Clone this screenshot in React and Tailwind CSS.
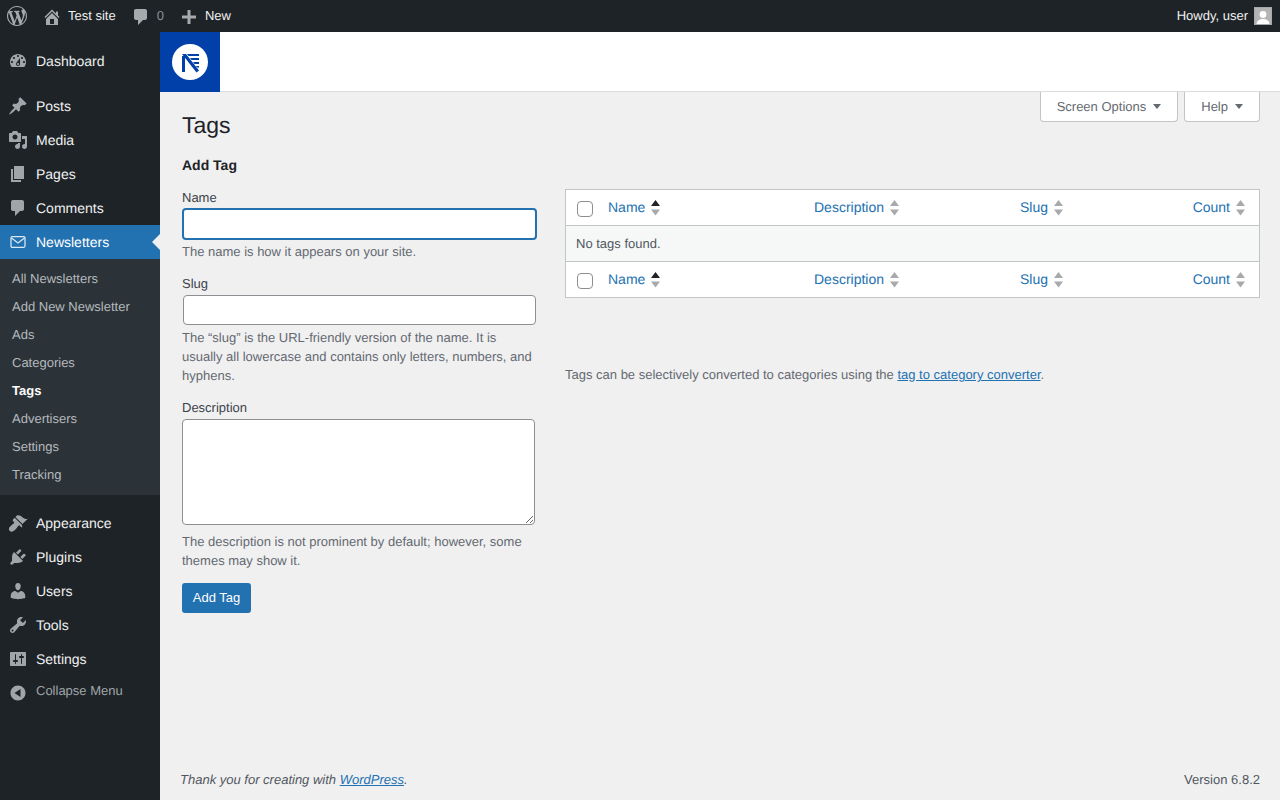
import React from "react";

const font = "font-['Liberation_Sans',Arial,sans-serif]";

const icons = {
  wordpress:
    "M20 10c0-5.51-4.49-10-10-10C4.48 0 0 4.49 0 10c0 5.52 4.48 10 10 10 5.51 0 10-4.48 10-10zM7.78 15.37L4.37 6.22c.55-.02 1.17-.08 1.17-.08.5-.06.44-1.13-.06-1.11 0 0-1.45.11-2.37.11-.18 0-.37 0-.58-.01C4.12 2.69 6.87 1.11 10 1.11c2.33 0 4.45.87 6.05 2.34-.68-.11-1.65.39-1.65 1.58 0 .74.45 1.36.9 2.1.35.61.55 1.36.55 2.46 0 1.49-1.4 5-1.4 5l-3.03-8.37c.54-.02.82-.17.82-.17.5-.05.44-1.25-.06-1.22 0 0-1.44.12-2.38.12-.87 0-2.33-.12-2.33-.12-.5-.03-.56 1.2-.06 1.22l.92.08 1.26 3.41zM17.41 10c.24-.64.74-1.87.43-4.25.7 1.29 1.05 2.71 1.05 4.25 0 3.29-1.73 6.24-4.4 7.78.97-2.59 1.94-5.2 2.92-7.78zM6.1 18.09C3.12 16.65 1.11 13.53 1.11 10c0-1.3.23-2.48.72-3.59C3.25 10.3 4.67 14.2 6.1 18.09zm4.03-6.63l2.58 6.98c-.86.29-1.76.45-2.71.45-.79 0-1.57-.11-2.29-.33.81-2.38 1.62-4.74 2.42-7.1z",
  home: "M16 8.5l1.53 1.53-1.06 1.06L10 4.62l-6.47 6.47-1.06-1.06L10 2.5l4 4v-2h2v4zm-6-2.46l6 5.99V18H4v-5.97zM12 17v-5H8v5h4z",
  dashboard:
    "M3.76 16h12.48c1.1-1.37 1.76-3.11 1.76-5 0-4.42-3.58-8-8-8s-8 3.58-8 8c0 1.89.66 3.63 1.76 5zM10 4c.55 0 1 .45 1 1s-.45 1-1 1-1-.45-1-1 .45-1 1-1zM6 6c.55 0 1 .45 1 1s-.45 1-1 1-1-.45-1-1 .45-1 1-1zm8 0c.55 0 1 .45 1 1s-.45 1-1 1-1-.45-1-1 .45-1 1-1zm-5.37 5.55L12 7v6c0 1.1-.9 2-2 2s-2-.9-2-2c0-.57.24-1.08.63-1.45zM4 10c.55 0 1 .45 1 1s-.45 1-1 1-1-.45-1-1 .45-1 1-1zm12 0c.55 0 1 .45 1 1s-.45 1-1 1-1-.45-1-1 .45-1 1-1zm-5 3c0-.55-.45-1-1-1s-1 .45-1 1 .45 1 1 1 1-.45 1-1z",
  posts:
    "M10.44 3.02l1.82-1.82 6.36 6.35-1.83 1.82c-1.05-.68-2.48-.57-3.41.36l-.75.75c-.92.93-1.04 2.35-.35 3.41l-1.83 1.82-2.41-2.41-2.8 2.79c-.42.42-3.38 2.71-3.8 2.29s1.86-3.39 2.28-3.81l2.79-2.79L4.1 9.36l1.83-1.82c1.05.69 2.48.57 3.4-.36l.75-.75c.93-.92 1.05-2.35.36-3.41z",
  media:
    "M13 11V4c0-.55-.45-1-1-1h-1.67L9 1H5L3.67 3H2c-.55 0-1 .45-1 1v7c0 .55.45 1 1 1h10c.55 0 1-.45 1-1zM7 4.5c1.38 0 2.5 1.12 2.5 2.5S8.38 9.5 7 9.5 4.5 8.38 4.5 7 5.62 4.5 7 4.5zM14 6h5v10.5c0 1.38-1.12 2.5-2.5 2.5S14 17.88 14 16.5s1.12-2.5 2.5-2.5c.17 0 .34.02.5.05V9h-3V6zm-4 8.05V13h2v3.5c0 1.38-1.12 2.5-2.5 2.5S7 17.88 7 16.5 8.12 14 9.5 14c.17 0 .34.02.5.05z",
  pages: "M6 15V2h10v13H6zm-1 1h8v2H3V5h2v11z",
  comments:
    "M5 2h9c1.1 0 2 .9 2 2v7c0 1.1-.9 2-2 2h-2l-5 5v-5H5c-1.1 0-2-.9-2-2V4c0-1.1.9-2 2-2z",
  appearance:
    "M14.48 11.06L7.41 3.99l1.5-1.5c.5-.56 2.3-.47 3.51.32 1.21.8 1.43 1.28 2.91 2.1 1.18.64 2.45 1.26 4.45.85zm-.71.71L6.7 4.7 4.93 6.47c-.39.39-.39 1.02 0 1.41l1.06 1.06c.39.39.39 1.03 0 1.42-.6.6-1.43 1.11-2.21 1.69-.35.26-.7.53-1.01.84C1.43 13.71.5 15.09 1.08 16.97c.15.49.76 1.07 1.1 1.39.41.38 1.32.5 1.65.38 1.86-.56 3.24-1.5 4.1-2.66.3-.31.57-.66.84-1.01.58-.78 1.09-1.61 1.69-2.21.39-.39 1.03-.39 1.42 0l1.06 1.06c.39.39 1.02.39 1.41 0z",
  plugins:
    "M13.11 4.36L9.87 7.6 8 5.73l3.24-3.24c.35-.34 1.05-.2 1.56.32.52.51.66 1.21.31 1.55zm-8 1.77l.91-1.12 9.01 9.01-1.19.84c-.71.71-2.63 1.16-3.82 1.16H6.14L4.9 17.26c-.59.59-1.54.59-2.12 0-.59-.58-.59-1.53 0-2.12l1.24-1.24v-3.88c0-1.13.4-3.19 1.09-3.89zm7.26 3.97l3.24-3.24c.34-.35 1.04-.21 1.55.31.52.51.66 1.21.31 1.55l-3.24 3.25z",
  users:
    "M10 9.25c-2.27 0-2.73-3.44-2.73-3.44C7 4.02 7.82 2 9.97 2c2.16 0 2.98 2.02 2.71 3.81 0 0-.41 3.44-2.68 3.44zm0 2.57L12.72 10c2.39 0 4.52 2.33 4.52 4.53v2.49s-3.65 1.13-7.24 1.13c-3.65 0-7.24-1.13-7.24-1.13v-2.49c0-2.25 1.94-4.48 4.47-4.48z",
  tools:
    "M16.68 9.77c-1.34 1.34-3.3 1.67-4.95.99l-5.41 6.52c-.99.99-2.59.99-3.58 0s-.99-2.59 0-3.57l6.52-5.42c-.68-1.65-.35-3.61.99-4.95 1.28-1.28 3.12-1.62 4.72-1.06l-2.89 2.89 2.82 2.82 2.86-2.87c.53 1.58.18 3.39-1.08 4.65zM3.81 16.21c.4.39 1.04.39 1.43 0 .4-.4.4-1.04 0-1.43-.39-.4-1.03-.4-1.43 0-.39.39-.39 1.03 0 1.43z",
  settings:
    "M18 16V4c0-.55-.45-1-1-1H3c-.55 0-1 .45-1 1v12c0 .55.45 1 1 1h14c.55 0 1-.45 1-1zM8 11h1c.55 0 1 .45 1 1s-.45 1-1 1H8v1.5c0 .28-.22.5-.5.5s-.5-.22-.5-.5V13H6c-.55 0-1-.45-1-1s.45-1 1-1h1V5.5c0-.28.22-.5.5-.5s.5.22.5.5V11zm5-2h-1c-.55 0-1-.45-1-1s.45-1 1-1h1V5.5c0-.28.22-.5.5-.5s.5.22.5.5V7h1c.55 0 1 .45 1 1s-.45 1-1 1h-1v5.5c0 .28-.22.5-.5.5s-.5-.22-.5-.5V9z",
  collapse:
    "M10 2.500c-4.140 0-7.500 3.360-7.500 7.500s3.360 7.500 7.500 7.500 7.500-3.360 7.500-7.500-3.360-7.500-7.500-7.500zM12.500 14L6.500 10l6-4z",
  plus: "M17 8.5v3h-5.5V17h-3v-5.5H3v-3h5.5V3h3v5.5z",
};

function Dash({ name, className }) {
  return (
    <svg viewBox="0 0 20 20" className={className} fill="currentColor" fillRule="evenodd">
      <path d={icons[name]} />
    </svg>
  );
}

const topItems = [["dashboard", "Dashboard"]];
const contentItems = [
  ["posts", "Posts"],
  ["media", "Media"],
  ["pages", "Pages"],
  ["comments", "Comments"],
];
const subItems = ["All Newsletters", "Add New Newsletter", "Ads", "Categories", "Tags", "Advertisers", "Settings", "Tracking"];
const lowerItems = [
  ["appearance", "Appearance"],
  ["plugins", "Plugins"],
  ["users", "Users"],
  ["tools", "Tools"],
  ["settings", "Settings"],
];

function MenuItem({ icon, label }) {
  return (
    <div className="flex h-[34px] items-center text-[14px] text-[#f0f0f1]">
      <Dash name={icon} className="ml-2 h-5 w-5 text-[#a0a5aa]" />
      <span className="ml-2">{label}</span>
    </div>
  );
}

function Sidebar() {
  return (
    <aside className="w-40 shrink-0 bg-[#1d2327] pt-3">
      {topItems.map(([icon, label]) => (
        <MenuItem key={label} icon={icon} label={label} />
      ))}
      <div className="h-[11px]" />
      {contentItems.map(([icon, label]) => (
        <MenuItem key={label} icon={icon} label={label} />
      ))}
      <div className="relative flex h-[34px] items-center bg-[#2271b1] text-[14px] text-white">
        <svg viewBox="0 0 16 14" className="ml-[10px] h-[14px] w-4 text-[#dbe9f4]" fill="none" stroke="currentColor" strokeWidth="1.25">
          <rect x="1" y="1.700" width="14" height="10.600" rx="1.200" />
          <path d="M1.500 3l6.500 5 6.500-5" />
        </svg>
        <span className="ml-[10px]">Newsletters</span>
        <span className="absolute right-0 top-[9px] h-0 w-0 border-y-8 border-r-8 border-y-transparent border-r-[#f0f0f1]" />
      </div>
      <div className="bg-[#2c3338] pb-[6px] pt-[6px] text-[13px]">
        {subItems.map((label) => (
          <div
            key={label}
            className={
              label === "Tags"
                ? "flex h-7 items-center pl-3 font-bold text-white"
                : "flex h-7 items-center pl-3 text-[#b4b9be]"
            }
          >
            {label}
          </div>
        ))}
      </div>
      <div className="h-[11px]" />
      {lowerItems.map(([icon, label]) => (
        <MenuItem key={label} icon={icon} label={label} />
      ))}
      <div className="flex h-[32px] items-center text-[13px] text-[#a0a5aa]">
        <Dash name="collapse" className="ml-2 h-5 w-5 translate-y-px text-[#a0a5aa]" />
        <span className="ml-2 -translate-y-px">Collapse Menu</span>
      </div>
    </aside>
  );
}

function AdminBar() {
  return (
    <header className="flex h-8 shrink-0 items-center bg-[#1d2327] text-[13px] text-[#f0f0f1]">
      <Dash name="wordpress" className="ml-[7px] h-5 w-5 text-[#a7aaad]" />
      <Dash name="home" className="ml-[15px] h-5 w-5 translate-y-px text-[#a7aaad]" />
      <span className="ml-[6px]">Test site</span>
      <Dash name="comments" className="ml-[15px] h-5 w-5 translate-y-px text-[#a7aaad]" />
      <span className="ml-[6px] text-[#8c8f94]">0</span>
      <Dash name="plus" className="ml-[15px] h-5 w-5 translate-y-px text-[#a7aaad]" />
      <span className="ml-[6px]">New</span>
      <span className="ml-auto">Howdy, user</span>
      <span className="ml-[6px] mr-2 flex h-[18px] w-[18px] items-end justify-center overflow-hidden border border-[#a7aaad] bg-[#b4b4b4]">
        <svg viewBox="0 0 16 16" className="h-4 w-4 text-white" fill="currentColor">
          <circle cx="8" cy="6.500" r="3.400" />
          <path d="M1.500 16c.5-3.600 3-5 6.500-5s6 1.400 6.500 5z" />
        </svg>
      </span>
    </header>
  );
}

function SortArrows({ active }) {
  return (
    <svg viewBox="0 0 9 16" className="ml-[6px] h-4 w-[9px]">
      <path d="M4.500 0L9 6H0z" fill={active ? "#1d2327" : "#a7aaad"} />
      <path d="M0 9.500h9L4.500 15.500z" fill="#a7aaad" />
    </svg>
  );
}

function Checkbox() {
  return <input type="checkbox" className="h-4 w-4 appearance-none rounded-[4px] border border-[#8c8f94] bg-white" />;
}

function TableRow({ bordered }) {
  return (
    <div className={bordered ? "flex h-[36px] items-center border-t border-[#c3c4c7] text-[14px] text-[#2271b1]" : "flex h-[35px] items-center text-[14px] text-[#2271b1]"}>
      <div className="ml-[11px] flex w-[31px] translate-y-px items-center">
        <Checkbox />
      </div>
      <div className="flex w-[206px] items-center">
        Name
        <SortArrows active />
      </div>
      <div className="flex w-[206px] items-center">
        Description
        <SortArrows />
      </div>
      <div className="flex w-[100px] items-center">
        Slug
        <SortArrows />
      </div>
      <div className="ml-auto mr-[14px] flex items-center">
        Count
        <SortArrows />
      </div>
    </div>
  );
}

function TermForm() {
  const label = "block text-[13px] leading-[19px] text-[#3c434a]";
  const help = "text-[13px] leading-[19px] text-[#646970]";
  return (
    <form className="w-[355px] shrink-0">
      <label className={label}>Name</label>
      <input className="mt-px block h-8 w-[355px] rounded-[4px] border-2 border-[#2271b1] bg-white outline-none" />
      <p className={`${help} mt-[2px]`}>The name is how it appears on your site.</p>
      <label className={`${label} mt-[13px]`}>Slug</label>
      <input className="ml-px mt-[2px] block h-[30px] w-[353px] rounded-[4px] border border-[#8c8f94] bg-white outline-none" />
      <p className={`${help} mt-[3px] w-[353px]`}>
        The “slug” is the URL-friendly version of the name. It is usually all lowercase and contains only letters, numbers, and hyphens.
      </p>
      <label className={`${label} mt-[13px]`}>Description</label>
      <textarea className="mt-[2px] block h-[106px] w-[353px] rounded-[4px] border border-[#8c8f94] bg-white outline-none" />
      <p className={`${help} mt-[7px] w-[353px]`}>The description is not prominent by default; however, some themes may show it.</p>
      <button type="button" className="mt-[13px] h-[30px] w-[69px] rounded-[3px] bg-[#2271b1] text-[13px] text-white">
        Add Tag
      </button>
    </form>
  );
}

function TagsPanel() {
  return (
    <div className="mt-px min-w-0 flex-1">
      <div className="border border-[#c3c4c7] bg-white">
        <TableRow />
        <div className="flex h-[36px] items-center border-t border-[#c3c4c7] bg-[#f6f7f7] pl-[10px] text-[13px] text-[#50575e]">No tags found.</div>
        <TableRow bordered />
      </div>
      <p className="mt-[67px] text-[13px] leading-[19px] text-[#646970]">
        Tags can be selectively converted to categories using the{" "}
        <a className="text-[#2271b1] underline">tag to category converter</a>.
      </p>
    </div>
  );
}

function ScreenTab({ label, className }) {
  return (
    <div className={`flex h-[30px] items-center rounded-b-[4px] border border-t-0 border-[#c3c4c7] bg-white text-[13px] text-[#646970] ${className}`}>
      {label}
      <span className="ml-[7px] h-0 w-0 border-x-4 border-t-[5px] border-x-transparent border-t-[#646970]" />
    </div>
  );
}

export default function App() {
  return (
    <div className={`flex h-screen w-screen flex-col overflow-hidden bg-[#f0f0f1] [text-rendering:geometricPrecision] ${font}`}>
      <AdminBar />
      <div className="flex min-h-0 flex-1">
        <Sidebar />
        <main className="flex min-w-0 flex-1 flex-col">
          <div className="h-[60px] shrink-0 border-b border-[#dcdcde] bg-white">
            <div className="flex h-[60px] w-[60px] items-center justify-center bg-[#0040a8]">
              <svg viewBox="0 0 36 36" className="h-9 w-9">
                <circle cx="18" cy="18" r="18" fill="#fff" />
                <path d="M10 12h3v16h-3z" fill="#0040a8" />
                <path d="M10 10h4l13 16.500-2.500 2z" fill="#0040a8" />
                <path d="M15 10h12v2H16.500zM18 14h9v2h-7.500zM21 18h6v2h-4.500zM24 22h3v1.500h-2z" fill="#0040a8" />
              </svg>
            </div>
          </div>
          <div className="flex min-h-0 flex-1 flex-col pl-[22px] pr-5">
            <div className="flex items-start justify-between">
              <h1 className="mt-[19px] text-[23px] leading-[29px] text-[#1d2327]">Tags</h1>
              <div className="flex gap-[6px]">
                <ScreenTab label="Screen Options" className="pl-4 pr-4" />
                <ScreenTab label="Help" className="pl-4 pr-4" />
              </div>
            </div>
            <h2 className="mt-[16px] text-[14px] font-semibold leading-[18px] text-[#1d2327]">Add Tag</h2>
            <div className="mt-[14px] flex gap-[28px]">
              <TermForm />
              <TagsPanel />
            </div>
            <footer className="mb-[11px] -ml-[2px] mt-auto flex justify-between text-[13px] leading-[19px] text-[#50575e]">
              <p className="italic">
                Thank you for creating with <a className="text-[#2271b1] underline">WordPress</a>.
              </p>
              <p>Version 6.8.2</p>
            </footer>
          </div>
        </main>
      </div>
    </div>
  );
}
